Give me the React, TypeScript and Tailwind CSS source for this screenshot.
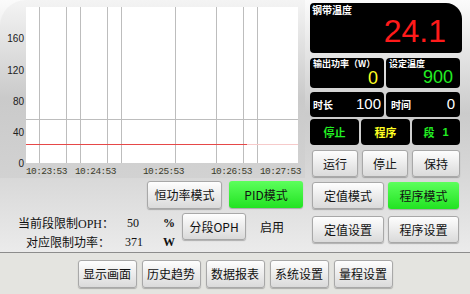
import React from 'react';

const cjk = { fontFamily: '"Noto Sans CJK SC", "Liberation Sans", sans-serif' };
const serif = { fontFamily: '"Liberation Serif", "Noto Sans CJK SC", serif' };
const sans = { fontFamily: '"Liberation Sans", sans-serif' };

const gridX = [39.5, 66.5, 80.5, 107.5, 121.5, 175.5, 216.5, 243.5, 257.5];
const yLabels = [
  { v: '160', y: 38 },
  { v: '120', y: 70 },
  { v: '80', y: 101 },
  { v: '40', y: 132 },
  { v: '0', y: 163 },
];
const xLabels = [
  { t: '10:23:53', x: 26 },
  { t: '10:24:53', x: 75 },
  { t: '10:25:53', x: 143 },
  { t: '10:26:53', x: 211 },
  { t: '10:27:53', x: 260 },
];

function TrendChart() {
  return (
    <div className="h-[178px] w-[305px] rounded-tl-[26px] bg-[linear-gradient(to_bottom,#f4f4f4,#cacaca_55%,#d2d2d2)]">
      <svg width="305" height="178" viewBox="0 0 305 178">
        <rect x="26" y="7" width="272" height="156" fill="#ffffff" />
        {gridX.map((x) => (
          <line key={x} x1={x} y1="7" x2={x} y2="163" stroke="#bdbdbd" strokeWidth="1" />
        ))}
        <line x1="26" y1="119.5" x2="298" y2="119.5" stroke="#bdbdbd" strokeWidth="1" />
        <line x1="26" y1="144.5" x2="247" y2="144.5" stroke="#e64848" strokeWidth="1" />
        <line x1="247" y1="144.5" x2="298" y2="144.5" stroke="#f6caca" strokeWidth="1" />
        {yLabels.map((l) => (
          <text
            key={l.v}
            x="24"
            y={l.y + 4}
            textAnchor="end"
            fontSize="10"
            fill="#202020"
            fontFamily='"Liberation Sans", sans-serif'
          >
            {l.v}
          </text>
        ))}
        {xLabels.map((l) => (
          <text
            key={l.t}
            x={l.x}
            y="174"
            fontSize="9.5"
            fill="#3a3a2a"
            fontFamily='"Liberation Mono", monospace'
            letterSpacing="-0.6"
          >
            {l.t}
          </text>
        ))}
      </svg>
    </div>
  );
}

function GrayButton({ label, className = '' }: { label: string; className?: string }) {
  return (
    <div
      style={cjk}
      className={`flex items-center justify-center rounded-[3px] border border-[#a8a8a8] bg-[linear-gradient(to_bottom,#fefefe,#dadada)] text-[12px] text-[#111] shadow-[0_1px_1px_rgba(0,0,0,0.25)] ${className}`}
    >
      {label}
    </div>
  );
}

function GreenButton({ label, className = '' }: { label: string; className?: string }) {
  return (
    <div
      style={cjk}
      className={`flex items-center justify-center rounded-[3px] bg-[linear-gradient(to_bottom,#5cff5c,#22e322)] text-[12px] text-[#111] shadow-[0_1px_1px_rgba(0,0,0,0.25)] ${className}`}
    >
      {label}
    </div>
  );
}

function Cell({ children, className = '' }: { children: React.ReactNode; className?: string }) {
  return <div className={`rounded-[4px] bg-black ${className}`}>{children}</div>;
}

export default function App() {
  return (
    <div className="relative h-[294px] w-[470px] overflow-hidden bg-[#e4e4e0]" style={cjk}>
      {/* Main area */}
      <div className="flex h-[252px] bg-[linear-gradient(to_bottom,#fbfbfb,#cbcbcb_45%,#d8d8d8_70%,#ebebeb)]">
        {/* Left column */}
        <div className="w-[310px] shrink-0">
          <TrendChart />

          <div className="mt-[3px] flex gap-[7px] pl-[147px]">
            <GrayButton label="恒功率模式" className="h-[28px] w-[75px]" />
            <GreenButton label="PID模式" className="h-[27px] w-[74px]" />
          </div>

          <div className="mt-[4px] flex items-start">
            <div className="mt-[1px] grid grid-cols-[114px_40px_28px] text-[12px] leading-[18px] text-[#111]">
              <div className="text-right">
                当前段限制<span style={serif}>OPH</span>：
              </div>
              <div style={serif} className="pl-[13px]">50</div>
              <div style={serif} className="pl-[9px] font-bold">%</div>
              <div className="text-right pr-[4px]">对应限制功率：</div>
              <div style={serif} className="pl-[11px]">371</div>
              <div style={serif} className="pl-[9px] font-bold">W</div>
            </div>
            <GrayButton label="分段OPH" className="h-[27px] w-[64px]" />
            <div className="ml-[14px] mt-[5px] text-[12px] text-[#111]">启用</div>
          </div>
        </div>

        {/* Right column */}
        <div className="w-[156px] pt-[3px]">
          <Cell className="relative h-[50px] w-[152px] rounded-tr-[16px]">
            <div className="absolute left-[2px] top-[0px] text-[10px] font-bold leading-[13px] text-white">钢带温度</div>
            <div className="absolute right-[16px] top-[10px] text-[32px] leading-[36px] text-[#ff1a1a]" style={sans}>
              24.1
            </div>
          </Cell>

          <div className="mt-[5px] flex gap-[2px]">
            <Cell className="relative h-[30px] w-[74px]">
              <div className="absolute left-[3px] top-[0px] whitespace-nowrap text-[9px] font-bold leading-[11px] text-white">
                输出功率（W）
              </div>
              <div className="absolute right-[6px] top-[10px] text-[18px] leading-[20px] text-[#ffff22]" style={sans}>
                0
              </div>
            </Cell>
            <Cell className="relative h-[30px] w-[74px]">
              <div className="absolute left-[3px] top-[0px] text-[9px] font-bold leading-[11px] text-white">设定温度</div>
              <div className="absolute right-[7px] top-[9px] text-[18px] leading-[20px] text-[#22ee22]" style={sans}>
                900
              </div>
            </Cell>
          </div>

          <div className="mt-[4px] flex gap-[2px]">
            <Cell className="flex h-[25px] w-[74px] items-center justify-between px-[3px]">
              <span className="text-[10px] font-bold text-white">时长</span>
              <span className="text-[15px] text-white" style={sans}>100</span>
            </Cell>
            <Cell className="flex h-[25px] w-[74px] items-center justify-between px-[5px]">
              <span className="text-[10px] font-bold text-white">时间</span>
              <span className="text-[15px] text-white" style={sans}>0</span>
            </Cell>
          </div>

          <div className="mt-[2px] flex gap-[2px]">
            <Cell className="flex h-[26px] w-[49px] items-center justify-center text-[11px] font-bold text-[#22ee22]">停止</Cell>
            <Cell className="flex h-[26px] w-[49px] items-center justify-center text-[11px] font-bold text-[#ffff22]">程序</Cell>
            <Cell className="flex h-[26px] w-[48px] items-center justify-center gap-[8px] text-[11px] font-bold text-[#22ee22]">
              <span>段</span>
              <span style={sans}>1</span>
            </Cell>
          </div>

          <div className="mt-[5px] flex gap-[4px] pl-[2px]">
            <GrayButton label="运行" className="h-[27px] w-[46px]" />
            <GrayButton label="停止" className="h-[27px] w-[46px]" />
            <GrayButton label="保持" className="h-[27px] w-[48px]" />
          </div>

          <div className="mt-[5px] flex gap-[4px] pl-[2px]">
            <GrayButton label="定值模式" className="h-[27px] w-[72px]" />
            <GreenButton label="程序模式" className="h-[27px] w-[71px]" />
          </div>

          <div className="mt-[7px] flex gap-[4px] pl-[2px]">
            <GrayButton label="定值设置" className="h-[27px] w-[72px]" />
            <GrayButton label="程序设置" className="h-[27px] w-[71px]" />
          </div>
        </div>
      </div>

      {/* Bottom navigation */}
      <div className="flex justify-center gap-[5px] border-t border-[#8c8c8c] pt-[7px]">
        <GrayButton label="显示画面" className="h-[28px] w-[59px]" />
        <GrayButton label="历史趋势" className="h-[28px] w-[59px]" />
        <GrayButton label="数据报表" className="h-[28px] w-[59px]" />
        <GrayButton label="系统设置" className="h-[28px] w-[59px]" />
        <GrayButton label="量程设置" className="h-[28px] w-[59px]" />
      </div>
    </div>
  );
}
